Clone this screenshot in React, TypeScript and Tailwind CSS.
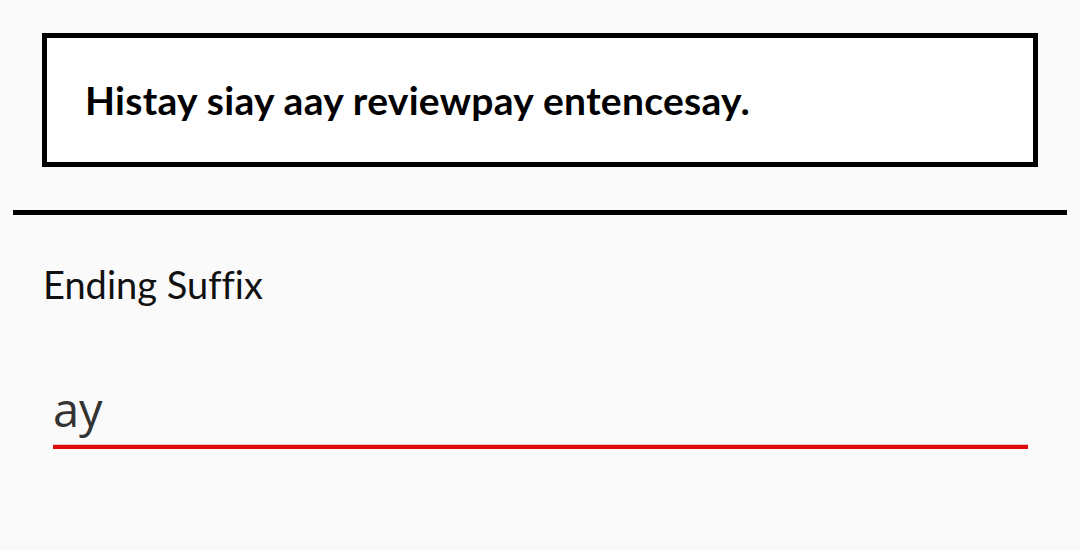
export default function App() {
  return (
    <div className="w-[1080px] h-[551px] bg-[#fafafa] overflow-hidden [font-variant-ligatures:none]" style={{ fontFamily: 'Lato, "Open Sans", sans-serif' }}>
      <div className="pt-[33px] px-[42px]">
        <div className="h-[134px] border-[5px] border-black bg-white flex items-center pl-[38px]">
          <p className="text-[39px] font-bold text-black leading-none tracking-[0.3px]">Histay siay aay reviewpay entencesay.</p>
        </div>
      </div>
      <div className="mx-[13px] mt-[43px] h-[5px] bg-black" />
      <div className="px-[43px] pt-[50px]">
        <div className="text-[38px] text-[#111] leading-none">Ending Suffix</div>
      </div>
      <div className="pl-[53px] pr-[52px] pt-[83px]" style={{ fontFamily: '"Open Sans", sans-serif' }}>
        <div className="text-[47px] text-[#333] leading-none pb-[11px]">ay</div>
        <div className="h-[1px] bg-[#f3c0c0]" />
        <div className="h-[4px] bg-[#e00b0b]" />
      </div>
    </div>
  );
}
